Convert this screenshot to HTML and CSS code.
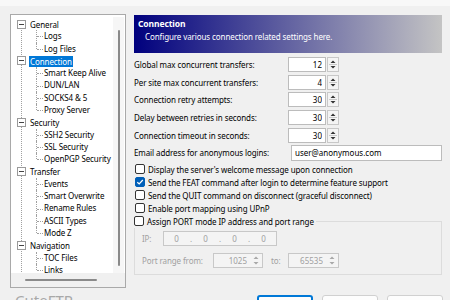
FILE: index.html
```html
<!DOCTYPE html>
<html lang="en">
<head>
  <meta charset="UTF-8">
  <meta name="viewport" content="width=device-width, initial-scale=1.0">
  <title>Global Options - Connection</title>
  <link rel="stylesheet" href="styles.css">
</head>
<body>
  <div class="top-edge"></div>
  <div class="dialog">
    <!-- 왼쪽 트리 -->
    <div class="tree-panel">
      <div class="tree-view">
        <ul class="tree">
          <li class="group">
            <div class="node"><span class="expander"></span><span class="label">General</span></div>
            <ul class="children">
              <li>Logs</li>
              <li>Log Files</li>
            </ul>
          </li>
          <li class="group">
            <div class="node"><span class="expander"></span><span class="label selected">Connection</span></div>
            <ul class="children">
              <li>Smart Keep Alive</li>
              <li>DUN/LAN</li>
              <li>SOCKS4 &amp; 5</li>
              <li>Proxy Server</li>
            </ul>
          </li>
          <li class="group">
            <div class="node"><span class="expander"></span><span class="label">Security</span></div>
            <ul class="children">
              <li>SSH2 Security</li>
              <li>SSL Security</li>
              <li>OpenPGP Security</li>
            </ul>
          </li>
          <li class="group">
            <div class="node"><span class="expander"></span><span class="label">Transfer</span></div>
            <ul class="children">
              <li>Events</li>
              <li>Smart Overwrite</li>
              <li>Rename Rules</li>
              <li>ASCII Types</li>
              <li>Mode Z</li>
            </ul>
          </li>
          <li class="group">
            <div class="node"><span class="expander"></span><span class="label">Navigation</span></div>
            <ul class="children">
              <li>TOC Files</li>
              <li class="last-visible">Links</li>
            </ul>
          </li>
        </ul>
        <div class="vscroll"><span class="vthumb"></span></div>
      </div>
      <div class="hscroll"><span class="hthumb"></span></div>
    </div>

    <!-- 오른쪽 설정 -->
    <div class="content">
      <div class="banner">
        <div class="banner-title">Connection</div>
        <div class="banner-desc">Configure various connection related settings here.</div>
      </div>

      <div class="fields">
        <div class="field">
          <span class="field-label">Global max concurrent transfers:</span>
          <div class="spin"><input class="spin-input" type="text" value="12"><span class="spin-btns"><svg width="10" height="13" viewBox="0 0 10 13"><path d="M2.5 5L5 2.5L7.5 5Z M2.5 8L5 10.5L7.5 8Z" fill="#333"/><path d="M1 6.5H9" stroke="#c8c8c8"/></svg></span></div>
        </div>
        <div class="field">
          <span class="field-label">Per site max concurrent transfers:</span>
          <div class="spin"><input class="spin-input" type="text" value="4"><span class="spin-btns"><svg width="10" height="13" viewBox="0 0 10 13"><path d="M2.5 5L5 2.5L7.5 5Z M2.5 8L5 10.5L7.5 8Z" fill="#333"/><path d="M1 6.5H9" stroke="#c8c8c8"/></svg></span></div>
        </div>
        <div class="field">
          <span class="field-label">Connection retry attempts:</span>
          <div class="spin"><input class="spin-input" type="text" value="30"><span class="spin-btns"><svg width="10" height="13" viewBox="0 0 10 13"><path d="M2.5 5L5 2.5L7.5 5Z M2.5 8L5 10.5L7.5 8Z" fill="#333"/><path d="M1 6.5H9" stroke="#c8c8c8"/></svg></span></div>
        </div>
        <div class="field">
          <span class="field-label">Delay between retries in seconds:</span>
          <div class="spin"><input class="spin-input" type="text" value="30"><span class="spin-btns"><svg width="10" height="13" viewBox="0 0 10 13"><path d="M2.5 5L5 2.5L7.5 5Z M2.5 8L5 10.5L7.5 8Z" fill="#333"/><path d="M1 6.5H9" stroke="#c8c8c8"/></svg></span></div>
        </div>
        <div class="field">
          <span class="field-label">Connection timeout in seconds:</span>
          <div class="spin"><input class="spin-input" type="text" value="30"><span class="spin-btns"><svg width="10" height="13" viewBox="0 0 10 13"><path d="M2.5 5L5 2.5L7.5 5Z M2.5 8L5 10.5L7.5 8Z" fill="#333"/><path d="M1 6.5H9" stroke="#c8c8c8"/></svg></span></div>
        </div>
        <div class="field">
          <span class="field-label">Email address for anonymous logins:</span>
          <input class="email-input" type="text" value="user@anonymous.com">
        </div>
      </div>

      <div class="checks">
        <label class="check"><span class="box"></span>Display the server's welcome message upon connection</label>
        <label class="check"><span class="box checked"><svg width="8" height="8" viewBox="0 0 8 8"><path d="M1.3 4.2L3.2 6L6.8 2" fill="none" stroke="#fff" stroke-width="1.2"/></svg></span>Send the FEAT command after login to determine feature support</label>
        <label class="check"><span class="box"></span>Send the QUIT command on disconnect (graceful disconnect)</label>
        <label class="check"><span class="box"></span>Enable port mapping using UPnP</label>
      </div>

      <fieldset class="port-group">
        <legend class="check"><span class="box"></span>Assign PORT mode IP address and port range</legend>
        <div class="ip-row">
          <span class="ip-label">IP:</span>
          <div class="ip-box">
            <span class="octet">0</span><span class="dot">.</span>
            <span class="octet">0</span><span class="dot">.</span>
            <span class="octet">0</span><span class="dot">.</span>
            <span class="octet">0</span>
          </div>
        </div>
        <div class="port-row">
          <span class="port-label">Port range from:</span>
          <div class="spin disabled"><input class="spin-input" type="text" value="1025" disabled><span class="spin-btns"><svg width="10" height="13" viewBox="0 0 10 13"><path d="M2.5 5L5 2.5L7.5 5Z M2.5 8L5 10.5L7.5 8Z" fill="#a8a8a8"/></svg></span></div>
          <span class="to-label">to:</span>
          <div class="spin disabled"><input class="spin-input wide" type="text" value="65535" disabled><span class="spin-btns"><svg width="10" height="13" viewBox="0 0 10 13"><path d="M2.5 5L5 2.5L7.5 5Z M2.5 8L5 10.5L7.5 8Z" fill="#a8a8a8"/></svg></span></div>
        </div>
      </fieldset>
    </div>
  </div>

  <div class="footer">
    <div class="brand">CuteFTP</div>
    <div class="buttons">
      <button class="default">OK</button>
      <button>Cancel</button>
      <button>Help</button>
    </div>
  </div>
</body>
</html>
```

FILE: styles.css
```css
* {
  box-sizing: border-box;
}
body {
  margin: 0;
  width: 450px;
  height: 300px;
  overflow: hidden;
  background-color: #f0f0f0;
  font-family: "Noto Sans", "Segoe UI", sans-serif;
  font-size: 8px;
  letter-spacing: -0.1px;
  color: #000;
}
.top-edge {
  height: 6px;
  background-color: #f8f8f8;
}
.dialog {
  display: flex;
  gap: 8px;
  padding: 8px 0 0 10px;
}

/* 트리 */
.tree-panel {
  width: 116px;
  height: 274px;
  border: 1px solid #a9a9a9;
  background-color: #fff;
  display: flex;
  flex-direction: column;
}
.tree-view {
  flex: 1;
  display: flex;
  overflow: hidden;
}
.tree {
  flex: 1;
  margin: 0;
  padding: 3px 0 0 10px;
  list-style: none;
}
.group {
  position: relative;
}
.group::before {
  content: "";
  position: absolute;
  left: 0;
  top: 6px;
  bottom: -6px;
  border-left: 1px dotted #a0a0a0;
}
.node {
  position: relative;
  height: 12.3px;
  padding-left: 8px;
  display: flex;
  align-items: center;
}
.expander {
  position: absolute;
  left: -4px;
  top: 1.6px;
  width: 9px;
  height: 9px;
  border: 1px solid #9a9a9a;
  background-color: #fff;
  z-index: 1;
}
.expander::after {
  content: "";
  position: absolute;
  left: 1px;
  top: 3px;
  width: 5px;
  height: 1px;
  background-color: #444;
}
.label {
  padding: 0 1px;
  height: 11px;
  line-height: 11px;
}
.selected {
  background-color: #0078d7;
  color: #fff;
}
.children {
  margin: 0 0 0 15px;
  padding: 0;
  list-style: none;
}
.children li {
  position: relative;
  height: 12.3px;
  line-height: 12.3px;
  padding-left: 8px;
}
.children li::before {
  content: "";
  position: absolute;
  left: 0;
  top: 0;
  height: 100%;
  border-left: 1px dotted #a0a0a0;
}
.children li:last-child::before {
  height: 50%;
}
.children li::after {
  content: "";
  position: absolute;
  left: 1px;
  top: 50%;
  width: 6px;
  border-top: 1px dotted #a0a0a0;
}
/* 마지막 줄은 스크롤 경계에 걸림 */
.children li.last-visible {
  line-height: 9px;
  padding-top: 1.5px;
}
.vscroll {
  width: 11px;
  margin: 2px 1px 0 0;
  background-color: #f6f6f6;
  display: flex;
  justify-content: center;
  padding-top: 13px;
}
.vthumb {
  width: 2px;
  height: 236px;
  background-color: #8a8a8a;
  border-radius: 1px;
}
.hscroll {
  height: 14px;
  background-color: #f0f0f0;
  display: flex;
  align-items: center;
  padding-left: 14px;
}
.hthumb {
  width: 72px;
  height: 2px;
  background-color: #8a8a8a;
  border-radius: 1px;
}

/* 설정 영역 */
.content {
  width: 308px;
  display: flex;
  flex-direction: column;
  padding-top: 1px;
}
.banner {
  height: 38px;
  padding: 3px 4px 0;
  background: linear-gradient(to right, #00007e, #c4c4c4);
  color: #fff;
  line-height: 12px;
}
.banner-title {
  font-weight: bold;
  font-size: 8.5px;
}
.banner-desc {
  padding-left: 7px;
  margin-top: 1px;
}
.fields {
  margin-top: 3px;
}
.field {
  display: flex;
  align-items: center;
  height: 17.6px;
}
.field-label {
  width: 154px;
}
input {
  font: inherit;
  color: #000;
  margin: 0;
  outline: none;
}
.spin {
  display: flex;
  align-items: center;
  gap: 1px;
}
.spin-input {
  width: 38px;
  height: 15px;
  border: 1px solid #bcbcbc;
  background-color: #fff;
  text-align: right;
  padding: 0 3px;
}
.spin-btns {
  width: 12px;
  height: 15px;
  border: 1px solid #c8c8c8;
  background-color: #f4f4f4;
  display: flex;
  align-items: center;
  justify-content: center;
}
.email-input {
  width: 151px;
  height: 16px;
  margin-left: 3px;
  border: 1px solid #bcbcbc;
  background-color: #fff;
  padding: 0 3px;
}
.checks {
  margin-top: 1px;
}
.check {
  display: flex;
  align-items: center;
  gap: 3px;
  height: 13px;
  padding-left: 1px;
}
.box {
  width: 10px;
  height: 10px;
  border: 1px solid #333;
  border-radius: 2px;
  background-color: #fff;
  display: flex;
  align-items: center;
  justify-content: center;
}
.box.checked {
  background-color: #005fb8;
  border-color: #005fb8;
}
.port-group {
  margin: 0;
  padding: 0 0 6px;
  border: 1px solid #dcdcdc;
}
.port-group legend {
  padding: 0 2px 0 0;
  margin-left: -1px;
}
.ip-row,
.port-row {
  display: flex;
  align-items: center;
  height: 15px;
  padding-left: 7px;
  color: #a0a0a0;
}
.ip-row {
  margin-top: 3px;
}
.port-row {
  margin-top: 7px;
}
.ip-label {
  width: 21px;
}
.ip-box {
  width: 114px;
  height: 15px;
  border: 1px solid #c8c8c8;
  background-color: #f4f4f4;
  display: flex;
  align-items: center;
}
.octet {
  flex: 1;
  text-align: center;
}
.dot {
  width: 4px;
  text-align: center;
}
.port-label {
  width: 71px;
}
.spin.disabled {
  border: 1px solid #c8c8c8;
  background-color: #f4f4f4;
  height: 15px;
  gap: 0;
}
.spin.disabled .spin-input {
  width: 36px;
  height: 13px;
  border: none;
  background-color: transparent;
  color: #a0a0a0;
}
.spin.disabled .spin-input.wide {
  width: 37px;
}
.spin.disabled .spin-btns {
  height: 13px;
  border: none;
  background-color: transparent;
}
.to-label {
  width: 25px;
  padding-left: 8px;
}

/* 하단 */
.footer {
  display: flex;
  justify-content: space-between;
  padding: 2px 7px 0 15px;
}
.brand {
  font-size: 15px;
  letter-spacing: 0;
  color: #a8a8a8;
  line-height: 18px;
  padding-top: 1px;
}
.buttons {
  display: flex;
  gap: 9px;
  padding-top: 5px;
}
button {
  width: 56px;
  height: 23px;
  padding: 8px 0 0;
  font: inherit;
  background-color: #fdfdfd;
  border: 1px solid #d0d0d0;
  border-radius: 3px;
}
button.default {
  border: 2px solid #0078d7;
}
```
